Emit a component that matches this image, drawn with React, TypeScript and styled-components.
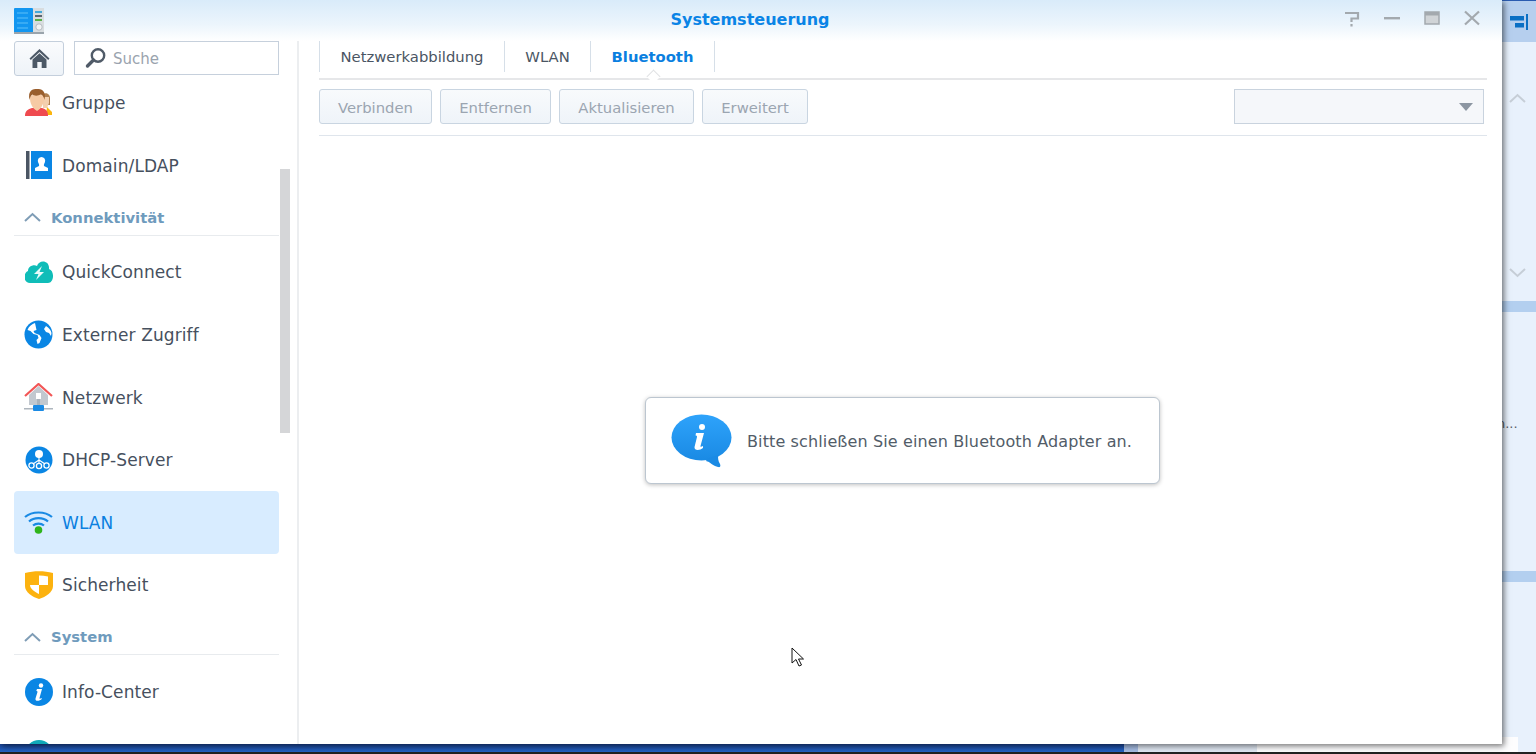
import React from "react";
import styled, { createGlobalStyle } from "styled-components";

const Global = createGlobalStyle`
  html, body { margin: 0; padding: 0; width: 1536px; height: 754px; overflow: hidden; background: #e8f1fc; }
  * { box-sizing: border-box; }
  body { font-family: "DejaVu Sans", Verdana, sans-serif; }
`;

const Desktop = styled.div`
  position: relative; width: 1536px; height: 754px; overflow: hidden;
  display: grid; grid-template-rows: 737px 17px; background: #e8f1fc;
`;
const BackArea = styled.div`display: flex; justify-content: flex-end;`;
const SidePanel = styled.div`
  width: 34px; height: 737px; display: flex; flex-direction: column; align-items: stretch; background: #e8f1fc;
  color: #5a5f68; font-size: 13px;
`;
const SideHead = styled.div`
  height: 42px; background: #b6cfee; border-top: 1px solid #2a5bb0; display: flex; align-items: center; padding-left: 8px;
`;
const Chev = styled.div<{ $mt: number }>`margin: ${p => p.$mt}px 0 0 7px; height: 10px; line-height: 0;`;
const Bar = styled.div<{ $mt: number }>`height: 11px; margin-top: ${p => p.$mt}px; background: #b3cfef;`;
const Dots = styled.div`margin: 104px 0 0 -5px; height: 16px; line-height: 16px; white-space: nowrap;`;

const Taskbar = styled.div`display: flex; flex-direction: column; height: 17px;`;
const TaskUpper = styled.div`height: 7px; display: flex; justify-content: flex-end;`;
const CornerWhite = styled.div`width: 34px; background: linear-gradient(90deg, #fdfdfe 16px, #e8f1fc 16px);`;
const TaskRow = styled.div`display: flex; height: 8px;`;
const TaskBlue = styled.div`width: 1124px; background: linear-gradient(#1c479c, #2362c2);`;
const TaskMid = styled.div`width: 14px; background: #a5bce2;`;
const TaskPale = styled.div`width: 119px; background: #dfe7f2;`;
const TaskWhite = styled.div`width: 261px; background: #fdfdfe;`;
const TaskRest = styled.div`flex: 1; background: #e8f1fc;`;
const TaskEdge = styled.div`height: 2px; background: #222;`;

const Window = styled.div`
  position: absolute; left: 0; top: 0; width: 1502px; height: 744px; background: #fff;
  box-shadow: 2px 2px 6px rgba(0,0,0,.55); display: flex; flex-direction: column;
`;
const TitleBar = styled.div`
  height: 41px; flex: none; display: flex; align-items: center; padding: 0 20px 3px 14px; position: relative;
  background: linear-gradient(#d9ebfa, #ecf5fc 60%, #fff);
`;
const Title = styled.div`
  position: absolute; left: 0; right: 0; top: 9px; text-align: center; padding-right: 2px;
  font: 700 16px/22px "DejaVu Sans", sans-serif; color: #0a84e6;
`;
const WinButtons = styled.div`margin-left: auto; display: flex; gap: 20px; position: relative;`;
const Body = styled.div`flex: 1; display: flex; min-height: 0;`;

const Sidebar = styled.div`
  width: 299px; flex: none; display: flex; border-right: 2px solid #eceef0; position: relative;
`;
const SideCol = styled.div`width: 279px; flex: none; padding-left: 14px; display: flex; flex-direction: column; min-height: 0;`;
const SearchRow = styled.div`display: flex; gap: 10px; height: 35px; flex: none;`;
const HomeBtn = styled.div`
  width: 50px; height: 35px; border: 1px solid #c4cfdc; border-radius: 3px; background: linear-gradient(#fafbfd, #eef3f8);
  display: flex; align-items: center; justify-content: center;
`;
const Search = styled.div`
  flex: 1; height: 34px; border: 1px solid #c6d0dc; display: flex; align-items: center; gap: 6px; padding-left: 10px;
  font-size: 15px; color: #9aa3ae; background: #fff;
`;
const SearchText = styled.span`margin-top: 1px;`;
const List = styled.div`flex: 1; overflow: hidden; min-height: 0;`;
const ListInner = styled.div`margin-top: -4.5px;`;
const Item = styled.div<{ $active?: boolean }>`
  height: 62.6px; display: flex; align-items: center; gap: 9px; padding-left: 10px; border-radius: 4px;
  font-size: 17px; letter-spacing: .1px; color: ${p => (p.$active ? "#0a7fe0" : "#46505e")};
  background: ${p => (p.$active ? "#d8ecff" : "transparent")};
`;
const ItemLabel = styled.span`margin-top: 1px;`;
const ItemIcon = styled.div`width: 29px; height: 30px; flex: none; display: flex; align-items: center; justify-content: center;`;
const Section = styled.div`
  height: 39px; margin-bottom: 5px; border-bottom: 1px solid #e8ebee; display: flex; align-items: center; gap: 10px;
  padding: 3px 0 0 10px; font-size: 14.8px; font-weight: 700; color: #6f9bbd;
`;
const Track = styled.div`width: 10px; margin-left: 1px; flex: none;`;
const Thumb = styled.div`width: 10px; height: 264px; margin-top: 128px; background: #d5d6d8;`;

const Main = styled.div`flex: 1; padding: 0 15px 0 20px; display: flex; flex-direction: column; min-width: 0;`;
const Tabs = styled.div`
  height: 39px; flex: none; display: flex; border-bottom: 2px solid #e6e7e9; position: relative; align-items: flex-start;
`;
const Tab = styled.div<{ $active?: boolean; $w: number }>`
  width: ${p => p.$w}px; height: 31px; border-right: 1px solid #d6dfe8; display: flex; align-items: center; justify-content: center;
  font-size: 14.8px; font-weight: ${p => (p.$active ? 700 : 400)}; color: ${p => (p.$active ? "#0a7fe0" : "#4a5563")};
  position: relative; &:first-child { border-left: 1px solid #d6dfe8; }
`;
const Notch = styled.div`
  position: absolute; left: 50%; top: 30px; width: 11px; height: 11px; margin-left: -5px;
  background: #fff; border-left: 1px solid #dfe1e3; border-top: 1px solid #dfe1e3; transform: rotate(45deg) scale(.9);
`;
const Toolbar = styled.div`
  height: 56px; flex: none; border-bottom: 1px solid #dfe5ec; display: flex; align-items: flex-start; padding-top: 9px; gap: 8px;
`;
const Btn = styled.div<{ $w: number }>`
  width: ${p => p.$w}px; height: 35px; border: 1px solid #c9d5e1; border-radius: 3px; background: linear-gradient(#f8fafc, #eff4f9);
  display: flex; align-items: center; justify-content: center; font-size: 14.8px; color: #9ba5b1; padding-top: 1px;
`;
const Select = styled.div`
  margin-left: auto; margin-right: 3px; width: 250px; height: 35px; border: 1px solid #c9d3de; background: #f5f7fa;
  display: flex; align-items: center; justify-content: flex-end; padding-right: 10px;
`;
const Content = styled.div`flex: 1; display: flex; padding: 261px 0 0 326px; align-items: flex-start;`;
const Message = styled.div`
  width: 515px; height: 87px; border: 1px solid #bcc6d0; border-radius: 6px; background: #fff;
  box-shadow: 0 1px 4px rgba(0,0,0,.25); display: flex; align-items: center; gap: 15px; padding-left: 25px;
  font-size: 16px; letter-spacing: .12px; color: #525c68; white-space: nowrap;
`;
const MessageText = styled.span`margin-top: 1px;`;
const CursorMark = styled.svg`position: absolute; left: 791px; top: 647px;`;

const Logo = () => (
  <svg width="31" height="27" viewBox="0 0 31 27" style={{ marginTop: 3 }}>
    <rect x="0" y="1" width="19" height="25" rx="1" fill="#1296f0" />
    <rect x="19" y="1" width="11" height="25" fill="#d8dde0" />
    <path d="M3 6h11M3 11h11M3 16h11M3 21h11" stroke="#5cc0f8" strokeWidth="1" />
    <rect x="21" y="4" width="7" height="2" fill="#45a8d8" />
    <rect x="21" y="8" width="7" height="2" fill="#5a6570" />
    <rect x="21" y="12" width="7" height="2" fill="#5ab04a" />
    <circle cx="25" cy="20" r="3.2" fill="#f2f4f5" stroke="#b5bcc2" />
    <rect x="0" y="25" width="30" height="2" fill="#9aa4ac" />
  </svg>
);
const Help = () => (
  <svg width="20" height="20" viewBox="0 0 20 20" fill="none" stroke="#a3a9ae" strokeWidth="2.2">
    <path d="M3 4h13v5.500H9.500V13" /><path d="M9.500 15v2.500" />
  </svg>
);
const Minimize = () => (
  <svg width="20" height="20" viewBox="0 0 20 20"><rect x="2" y="8" width="16" height="2.4" fill="#a3a9ae" /></svg>
);
const Maximize = () => (
  <svg width="20" height="20" viewBox="0 0 20 20"><rect x="3" y="3" width="14" height="12" fill="#d0d4d7" stroke="#a3a9ae" strokeWidth="1.5" /><rect x="3" y="3" width="14" height="3.5" fill="#a3a9ae" /></svg>
);
const Close = () => (
  <svg width="20" height="20" viewBox="0 0 20 20" stroke="#a3a9ae" strokeWidth="2.2"><path d="M3 2.500l14 13M17 2.500l-14 13" /></svg>
);
const Home = () => (
  <svg width="21" height="21" viewBox="0 0 21 21"><path d="M10.500 1L0.500 10.500l1.300 1.400 8.700-8 8.700 8 1.300-1.400z" fill="#4c5866" /><path d="M3.500 11.500l7-6.300 7 6.300V20h-4.800v-6H8.300v6H3.500z" fill="#4c5866" /></svg>
);
const Glass = () => (
  <svg width="22" height="22" viewBox="0 0 22 22" fill="none">
    <circle cx="13" cy="8.500" r="6.200" stroke="#505b68" strokeWidth="2.400" />
    <path d="M8.500 13L2.500 19" stroke="#505b68" strokeWidth="3.400" strokeLinecap="round" />
  </svg>
);
const GroupIcon = () => (
  <svg width="29" height="29" viewBox="0 0 29 29">
    <path d="M19 6c3-2 7 0 7 4v7h-7z" fill="#b08050" />
    <path d="M19 9h6v6l-2 5h-4z" fill="#f3cfae" />
    <path d="M23 19l5 5v3h-6z" fill="#fbb50e" />
    <path d="M1 28c0-5 3-7 7-8h2l3 2 3-2h2c4 1 6 3 6 8z" fill="#ef4a4f" />
    <path d="M6 10c0-5 14-5 14 0 0 5-2 10-7 13-5-3-7-8-7-13z" fill="#f6caa4" />
    <path d="M5.500 12C3.500 2 9 1 13 1s9.500 1 7.500 11c-.5-3-2-5-3.500-5.500C14 8 10 8 8.500 6.500 7 7.500 6 9 5.500 12z" fill="#9a5e2c" />
  </svg>
);
const DomainIcon = () => (
  <svg width="26" height="28" viewBox="0 0 26 28">
    <rect x="0" y="0" width="3.500" height="28" fill="#4b5664" />
    <rect x="5" y="0" width="21" height="28" fill="#0a86e4" />
    <path d="M15.500 6a3.800 3.800 0 013.500 5c-.5 1.500-1.500 2.500-1 4l4 2v3H9v-3l4-2c.5-1.500-.5-2.500-1-4a3.800 3.800 0 013.500-5z" fill="#fff" />
  </svg>
);
const QuickIcon = () => (
  <svg width="28" height="24" viewBox="0 0 28 24">
    <path d="M5 23C-2 23-2 13 3 11 3 6 9 4 12 6 14-1 25 0 24 9c6 2 5 14-1 14z" fill="#10bdb8" />
    <path d="M17 6l-8 8h4.500l-2.500 6 8-8h-4.500l2.500-6z" fill="#e8fbfa" />
  </svg>
);
const GlobeIcon = () => (
  <svg width="29" height="29" viewBox="0 0 29 29">
    <circle cx="14.500" cy="14.500" r="14" fill="#0a86e4" />
    <path d="M11 3C8 4 5 6 3.500 10l3 1 3 3 4 1 1 3-2 2 1 4 2-1 2-5-2-3-5-2-1-2 3-1zM22 6l-2 3 2 3 3 1 2 3 .5-3c-.5-3-2.500-5-5.500-7z" fill="#fff" />
  </svg>
);
const NetIcon = () => (
  <svg width="29" height="29" viewBox="0 0 29 29">
    <path d="M5 12L14.500 3 24 12v10H5z" fill="#c2c8cf" />
    <path d="M1 13L14.500 1 28 13" fill="none" stroke="#f25656" strokeWidth="2.200" />
    <rect x="12" y="10" width="5" height="6" fill="#fff" />
    <rect x="13" y="16" width="3" height="6" fill="#aab2ba" />
    <rect x="0" y="25" width="29" height="1.500" fill="#aeb6be" />
    <rect x="9" y="22" width="11" height="6" rx="1" fill="#1a8ae4" />
  </svg>
);
const DhcpIcon = () => (
  <svg width="28" height="28" viewBox="0 0 28 28">
    <circle cx="14" cy="14" r="13.500" fill="#0a86e4" />
    <circle cx="14" cy="8" r="4" fill="#fff" />
    <path d="M14 11v7M14 14l-6 4M14 14l6 4" stroke="#fff" strokeWidth="1.100" fill="none" />
    <g fill="none" stroke="#fff" strokeWidth="1.300"><circle cx="6.500" cy="19.500" r="2.600" /><circle cx="14" cy="20" r="2.600" /><circle cx="21.500" cy="19.500" r="2.600" /></g>
  </svg>
);
const WifiIcon = () => (
  <svg width="29" height="24" viewBox="0 0 29 24" fill="none">
    <path d="M1 7C8 1 21 1 28 7" stroke="#1a8ae4" strokeWidth="2.200" />
    <path d="M5 11.500c5-4.500 14-4.500 19 0" stroke="#1a8ae4" strokeWidth="2.200" />
    <path d="M9 15.500c3-2.500 8-2.500 11 0" stroke="#1a8ae4" strokeWidth="2.200" />
    <circle cx="14.500" cy="20" r="3.800" fill="#2fb51c" />
  </svg>
);
const ShieldIcon = () => (
  <svg width="28" height="28" viewBox="0 0 28 28">
    <path d="M0 2c9-2.500 19-2.500 28 0v13c0 6-7 11-14 13C7 26 0 21 0 15z" fill="#fcb20f" />
    <path d="M14 4.500c3 0 6 .5 9 1V14h-9zM14 14H5c0 4 5 7 9 9z" fill="#fff" />
  </svg>
);
const InfoIcon = () => (
  <svg width="28" height="28" viewBox="0 0 28 28">
    <circle cx="14" cy="14" r="14" fill="#0a86e4" />
    <path d="M12 11h5l-2.500 9c-.3 1 .7 1 2 0l.3 1c-2 2-7 3-6.300-.5l2-6.500c.2-1-.7-1-1.200-1z" fill="#fff" />
    <circle cx="16" cy="7.500" r="2.200" fill="#fff" />
  </svg>
);
const TealIcon = () => (
  <svg width="28" height="28" viewBox="0 0 28 28"><circle cx="14" cy="14" r="14" fill="#10a8b8" /></svg>
);
const Up = ({ c = "#7f9db6" }: { c?: string }) => (
  <svg width="17" height="10" viewBox="0 0 17 10" fill="none"><path d="M1 9l7.500-7L16 9" stroke={c} strokeWidth="2" /></svg>
);
const Down = () => (
  <svg width="17" height="10" viewBox="0 0 17 10" fill="none"><path d="M1 1l7.500 7L16 1" stroke="#c6ced7" strokeWidth="2" /></svg>
);
const SideGlyph = () => (
  <svg width="18" height="16" viewBox="0 0 18 16">
    <rect x="0" y="2" width="14" height="4.500" fill="#0a6fc4" />
    <rect x="5" y="9" width="9" height="4.500" fill="#0a6fc4" />
    <rect x="16" y="0" width="2" height="16" fill="#0a6fc4" />
  </svg>
);
const Caret = () => (
  <svg width="14" height="8" viewBox="0 0 14 8"><path d="M0 0h14L7 8z" fill="#8c96a2" /></svg>
);
const Bubble = () => (
  <svg width="61" height="54" viewBox="0 0 61 54">
    <defs><linearGradient id="bub" x1="0" y1="0" x2="0" y2="1"><stop offset="0" stopColor="#2ea3fb" /><stop offset="1" stopColor="#1a8ae4" /></linearGradient></defs>
    <ellipse cx="30.500" cy="23.500" rx="30" ry="23" fill="url(#bub)" />
    <path d="M36 45l11-4c0 3 0 6 2 9 1 2.500 0 3.500-2 3-4-1-8-4-9-5l-3-1z" fill="#1a8ae4" />
    <path d="M25 19h8l-3.500 13c-.3 1.200.8 1 2.500 0v2c-3 2.500-9 3-8.500-1l2.500-10c.2-1-.5-1.500-1.500-1.500z" fill="#fff" />
    <circle cx="31" cy="13" r="3" fill="#fff" />
  </svg>
);

type Row = { icon: React.ReactNode; label: string; active?: boolean };
const groupsA: Row[] = [
  { icon: <GroupIcon />, label: "Gruppe" },
  { icon: <DomainIcon />, label: "Domain/LDAP" },
];
const groupsB: Row[] = [
  { icon: <QuickIcon />, label: "QuickConnect" },
  { icon: <GlobeIcon />, label: "Externer Zugriff" },
  { icon: <NetIcon />, label: "Netzwerk" },
  { icon: <DhcpIcon />, label: "DHCP-Server" },
  { icon: <WifiIcon />, label: "WLAN", active: true },
  { icon: <ShieldIcon />, label: "Sicherheit" },
];
const groupsC: Row[] = [
  { icon: <InfoIcon />, label: "Info-Center" },
  { icon: <TealIcon />, label: "" },
];

const renderRow = (r: Row) => (
  <Item key={r.label || "next"} $active={r.active}>
    <ItemIcon>{r.icon}</ItemIcon>
    <ItemLabel>{r.label}</ItemLabel>
  </Item>
);

export default function App() {
  return (
    <Desktop>
      <Global />
      <BackArea>
        <SidePanel>
          <SideHead><SideGlyph /></SideHead>
          <Chev $mt={51}><Up c="#c6ced7" /></Chev>
          <Chev $mt={165}><Down /></Chev>
          <Bar $mt={23} />
          <Dots>n...</Dots>
          <Bar $mt={139} />
        </SidePanel>
      </BackArea>
      <Taskbar>
        <TaskUpper><CornerWhite /></TaskUpper>
        <TaskRow><TaskBlue /><TaskMid /><TaskPale /><TaskWhite /><TaskRest /></TaskRow>
        <TaskEdge />
      </Taskbar>
      <Window>
        <TitleBar>
          <Logo />
          <Title>Systemsteuerung</Title>
          <WinButtons><Help /><Minimize /><Maximize /><Close /></WinButtons>
        </TitleBar>
        <Body>
          <Sidebar>
            <SideCol>
              <SearchRow>
                <HomeBtn><Home /></HomeBtn>
                <Search><Glass /><SearchText>Suche</SearchText></Search>
              </SearchRow>
              <List>
                <ListInner>
                  {groupsA.map(renderRow)}
                  <Section><Up /><span>Konnektivität</span></Section>
                  {groupsB.map(renderRow)}
                  <Section><Up /><span>System</span></Section>
                  {groupsC.map(renderRow)}
                </ListInner>
              </List>
            </SideCol>
            <Track><Thumb /></Track>
          </Sidebar>
          <Main>
            <Tabs>
              <Tab $w={186}>Netzwerkabbildung</Tab>
              <Tab $w={86}>WLAN</Tab>
              <Tab $w={124} $active>Bluetooth<Notch /></Tab>
            </Tabs>
            <Toolbar>
              <Btn $w={113}>Verbinden</Btn>
              <Btn $w={111}>Entfernen</Btn>
              <Btn $w={135}>Aktualisieren</Btn>
              <Btn $w={106}>Erweitert</Btn>
              <Select><Caret /></Select>
            </Toolbar>
            <Content>
              <Message><Bubble /><MessageText>Bitte schließen Sie einen Bluetooth Adapter an.</MessageText></Message>
            </Content>
          </Main>
        </Body>
      </Window>
      <CursorMark width="14" height="21" viewBox="0 0 14 21">
        <path d="M1 1v15l4-3.500 3 6.500 2.500-1-3-6h5z" fill="#fff" stroke="#111" strokeWidth="1" />
      </CursorMark>
    </Desktop>
  );
}
